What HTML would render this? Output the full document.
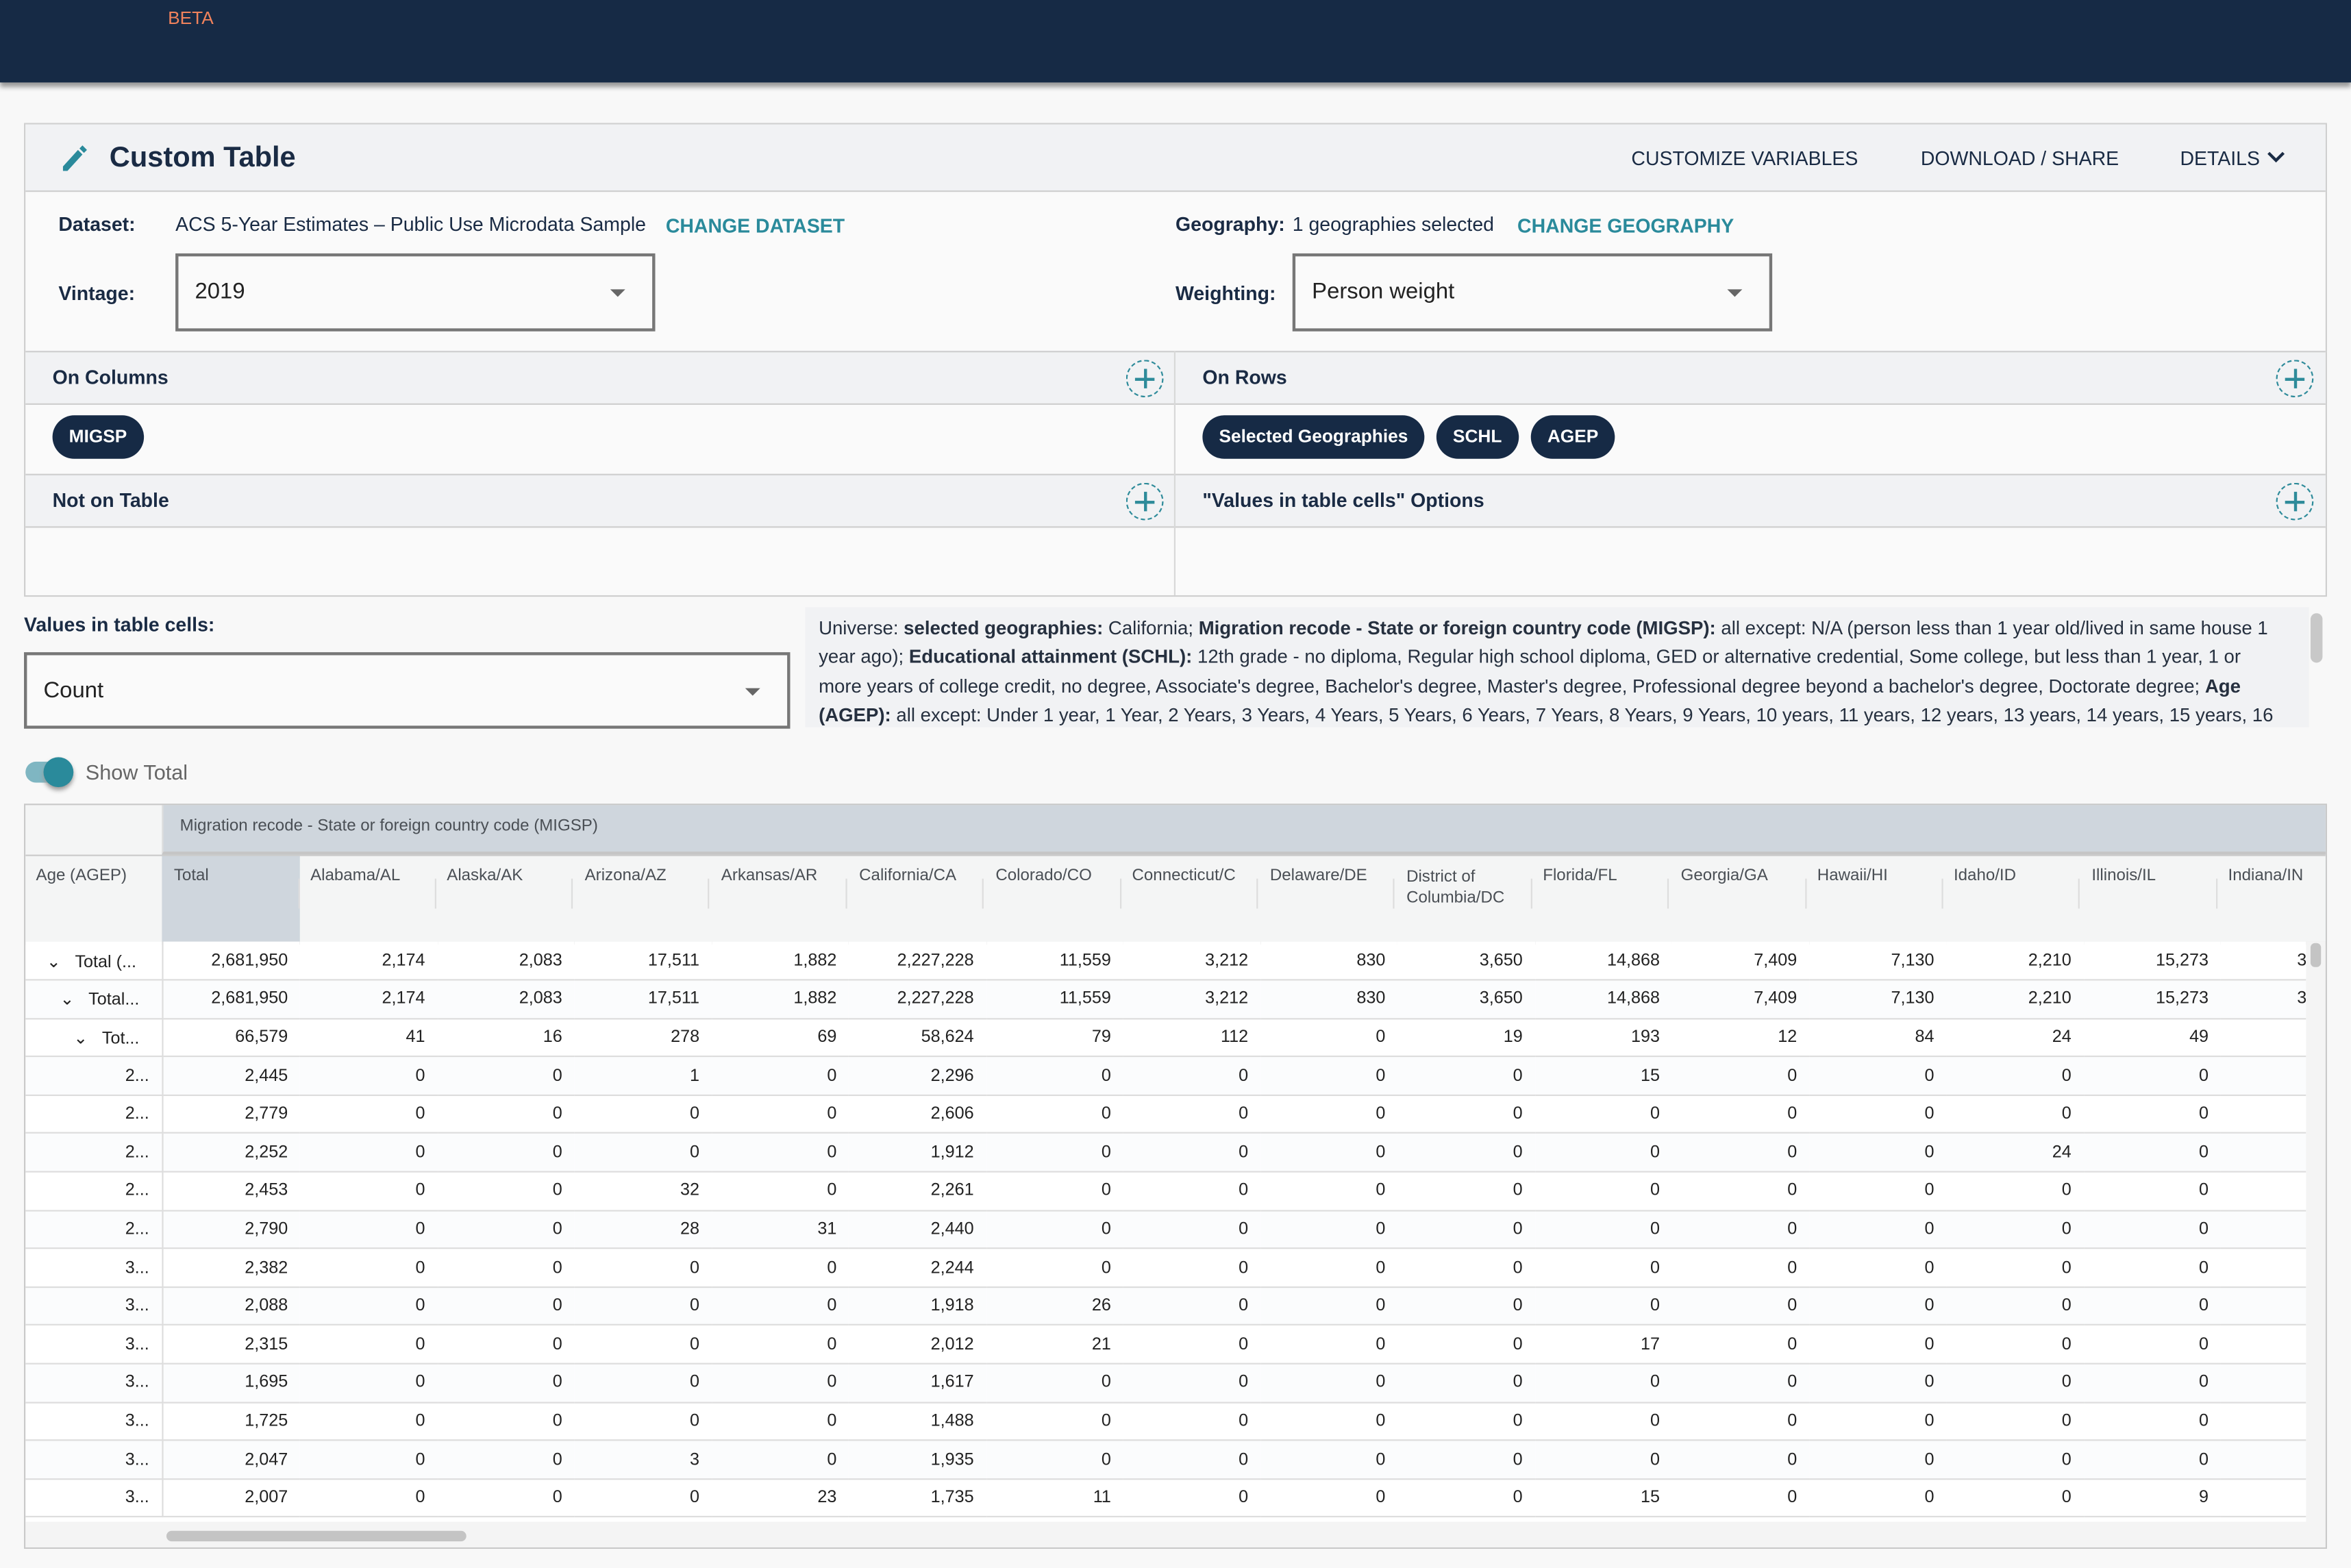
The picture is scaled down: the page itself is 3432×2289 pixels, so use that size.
<!DOCTYPE html>
<html><head><meta charset="utf-8">
<style>
html,body{margin:0;padding:0;}
body{width:3432px;height:2288px;overflow:hidden;background:#f8f8f8;font-family:"Liberation Sans",sans-serif;}
#w{position:absolute;left:0;top:0;width:1568px;height:1046px;transform:scale(2.18878);transform-origin:0 0;color:#1a2b44;}
.a{position:absolute;}
.hdr{left:0;top:0;width:1568px;height:55px;background:#162a45;box-shadow:0 3px 3px #999;}
.panel{left:16px;top:82px;width:1534px;height:314px;border:1px solid #cfcfcf;background:#fafafa;}
.bar{background:#f1f2f4;border-top:1px solid #cfcfcf;border-bottom:1px solid #cfcfcf;}
.lbl{font-size:13px;font-weight:bold;}
.chip{background:#162a45;color:#fff;font-size:12px;font-weight:bold;border-radius:15px;height:29px;line-height:29px;padding:0 11px;}
.plus{width:23px;height:23px;border:1px dashed #2e8b9a;border-radius:50%;}
.plus:before{content:"";position:absolute;left:11px;top:5px;width:1.5px;height:13px;background:#2e8b9a;}
.plus:after{content:"";position:absolute;left:5px;top:11px;width:13px;height:1.5px;background:#2e8b9a;}
.sel{border:2px solid #777;background:#fafafa;font-size:15px;color:#222;}
.sel .t{position:absolute;left:11px;top:15px;}
.sel .c{position:absolute;right:18px;top:22px;width:0;height:0;border-left:5px solid transparent;border-right:5px solid transparent;border-top:5px solid #666;}
.teal{color:#2a8a9b;font-weight:bold;font-size:13px;}
table{border-collapse:collapse;table-layout:fixed;font-size:11.5px;color:#222;}
td{height:25.6px;padding:0 8px;text-align:right;border-bottom:1px solid #ddd;white-space:nowrap;overflow:hidden;box-sizing:border-box;}
td:first-child{border-right:1px solid #ddd;}
tr:nth-child(odd) td{background:#fff;}
tr:nth-child(even) td{background:#fbfcfd;}
.hc{font-size:11px;color:#4a4f55;}
</style></head><body><div id="w">
<div class="a hdr"></div>
<div class="a" style="left:112px;top:5px;font-size:12px;color:#f0825c;">BETA</div>

<div class="a panel">
 <div class="a" style="left:0;top:0;width:1534px;height:44px;background:#f1f2f4;border-bottom:1px solid #cfcfcf;"></div>
 <svg class="a" style="left:23px;top:13px" width="20" height="20" viewBox="0 0 20 20"><path d="M2 18 L2 15 L12 4 L15 7 L5 18 Z" fill="#2a8a9b"/><path d="M13 3 L15 1 L18 4 L16 6 Z" fill="#2a8a9b"/></svg>
 <div class="a" style="left:56px;top:12px;font-size:19px;font-weight:bold;">Custom Table</div>
 <div class="a" style="left:1071px;top:15px;font-size:13px;">CUSTOMIZE VARIABLES</div>
 <div class="a" style="left:1264px;top:15px;font-size:13px;">DOWNLOAD / SHARE</div>
 <div class="a" style="left:1437px;top:15px;font-size:13px;">DETAILS</div>
 <svg class="a" style="left:1495px;top:17px" width="12" height="10"><path d="M1 2 L6 7 L11 2" stroke="#1a2b44" stroke-width="2" fill="none"/></svg>

 <div class="a lbl" style="left:22px;top:59px;">Dataset:</div>
 <div class="a" style="left:100px;top:59px;font-size:13px;">ACS 5-Year Estimates – Public Use Microdata Sample</div>
 <div class="a teal" style="left:427px;top:60px;">CHANGE DATASET</div>
 <div class="a lbl" style="left:22px;top:105px;">Vintage:</div>
 <div class="a sel" style="left:100px;top:86px;width:316px;height:48px;"><span class="t">2019</span><span class="c"></span></div>
 <div class="a lbl" style="left:767px;top:59px;">Geography:</div>
 <div class="a" style="left:845px;top:59px;font-size:13px;">1 geographies selected</div>
 <div class="a teal" style="left:995px;top:60px;">CHANGE GEOGRAPHY</div>
 <div class="a lbl" style="left:767px;top:105px;">Weighting:</div>
 <div class="a sel" style="left:845px;top:86px;width:316px;height:48px;"><span class="t">Person weight</span><span class="c"></span></div>

 <div class="a bar" style="left:0;top:151px;width:1534px;height:34px;"></div>
 <div class="a bar" style="left:0;top:233px;width:1534px;height:34px;"></div>
 <div class="a" style="left:766px;top:151px;width:1px;height:163px;background:#d8d8d8;"></div>
 <div class="a lbl" style="left:18px;top:161px;">On Columns</div>
 <div class="a lbl" style="left:785px;top:161px;">On Rows</div>
 <div class="a lbl" style="left:18px;top:243px;">Not on Table</div>
 <div class="a lbl" style="left:785px;top:243px;">"Values in table cells" Options</div>
 <div class="a plus" style="left:734px;top:157px;"></div>
 <div class="a plus" style="left:1501px;top:157px;"></div>
 <div class="a plus" style="left:734px;top:239px;"></div>
 <div class="a plus" style="left:1501px;top:239px;"></div>
 <div class="a chip" style="left:18px;top:194px;">MIGSP</div>
 <div class="a chip" style="left:785px;top:194px;">Selected Geographies</div>
 <div class="a chip" style="left:941px;top:194px;">SCHL</div>
 <div class="a chip" style="left:1004px;top:194px;">AGEP</div>
</div>

<div class="a lbl" style="left:16px;top:409px;">Values in table cells:</div>
<div class="a sel" style="left:16px;top:435px;width:507px;height:47px;"><span class="t">Count</span><span class="c"></span></div>

<div class="a" style="left:537px;top:405px;width:1003px;height:80px;background:#f1f2f4;overflow:hidden;font-size:12.6px;line-height:19.3px;color:#26303f;">
<div style="padding:5px 20px 0 9px;">Universe: <b>selected geographies:</b> California; <b>Migration recode - State or foreign country code (MIGSP):</b> all except: N/A (person less than 1 year old/lived in same house 1 year ago); <b>Educational attainment (SCHL):</b> 12th grade - no diploma, Regular high school diploma, GED or alternative credential, Some college, but less than 1 year, 1 or more years of college credit, no degree, Associate's degree, Bachelor's degree, Master's degree, Professional degree beyond a bachelor's degree, Doctorate degree; <b>Age (AGEP):</b> all except: Under 1 year, 1 Year, 2 Years, 3 Years, 4 Years, 5 Years, 6 Years, 7 Years, 8 Years, 9 Years, 10 years, 11 years, 12 years, 13 years, 14 years, 15 years, 16 years</div></div>
<div class="a" style="left:1541px;top:409px;width:8px;height:33px;background:#c8c8c8;border-radius:4px;"></div>

<div class="a" style="left:17px;top:508px;width:28px;height:14px;background:#7fb6c2;border-radius:7px;"></div>
<div class="a" style="left:29px;top:505px;width:20px;height:20px;background:#2a8a9b;border-radius:50%;box-shadow:0 2px 3px #999;"></div>
<div class="a" style="left:57px;top:507px;font-size:14px;color:#666;">Show Total</div>

<div class="a" style="left:16px;top:536px;width:1534px;height:495px;border:1px solid #c9c9c9;background:#fff;overflow:hidden;">
 <div class="a" style="left:0;top:0;width:1534px;height:91px;background:#f4f5f5;border-bottom:2px solid #ccc;"></div>
 <div class="a" style="left:91px;top:0;width:1443px;height:31px;background:#cfd6dd;border-bottom:2px solid #c5c5c5;border-left:1px solid #ddd;"></div>
 <div class="a hc" style="left:103px;top:8px;">Migration recode - State or foreign country code (MIGSP)</div>
 <div class="a" style="left:91px;top:33px;width:92px;height:58px;background:#cfd6dd;"></div>
 <div class="a" style="left:0;top:33px;width:1534px;height:1px;background:#ccc;"></div>
 <div class="a hc" style="left:7px;top:41px;">Age (AGEP)</div>
 <div class="a hc" style="left:99px;top:41px;">Total</div>
 <div class="a hc" style="left:190px;top:41px;">Alabama/AL</div>
 <div class="a hc" style="left:281px;top:41px;">Alaska/AK</div>
 <div class="a hc" style="left:373px;top:41px;">Arizona/AZ</div>
 <div class="a hc" style="left:464px;top:41px;">Arkansas/AR</div>
 <div class="a hc" style="left:556px;top:41px;">California/CA</div>
 <div class="a hc" style="left:647px;top:41px;">Colorado/CO</div>
 <div class="a hc" style="left:738px;top:41px;">Connecticut/C</div>
 <div class="a hc" style="left:830px;top:41px;">Delaware/DE</div>
 <div class="a hc" style="left:921px;top:41px;line-height:14px;">District of<br>Columbia/DC</div>
 <div class="a hc" style="left:1012px;top:41px;">Florida/FL</div>
 <div class="a hc" style="left:1104px;top:41px;">Georgia/GA</div>
 <div class="a hc" style="left:1195px;top:41px;">Hawaii/HI</div>
 <div class="a hc" style="left:1286px;top:41px;">Idaho/ID</div>
 <div class="a hc" style="left:1378px;top:41px;">Illinois/IL</div>
 <div class="a hc" style="left:1469px;top:41px;">Indiana/IN</div>
 <div class="a" style="left:182px;top:49px;width:1px;height:20px;background:#ddd;box-shadow:91px 0 #ddd,182px 0 #ddd,273px 0 #ddd,365px 0 #ddd,456px 0 #ddd,548px 0 #ddd,639px 0 #ddd,730px 0 #ddd,822px 0 #ddd,913px 0 #ddd,1005px 0 #ddd,1096px 0 #ddd,1187px 0 #ddd,1279px 0 #ddd;"></div>

 <div class="a" style="left:0;top:91px;width:1521px;height:386px;overflow:hidden;">
 <table style="width:1554px;">
 <colgroup><col style="width:91px"><col style="width:92px"><col span="14" style="width:91.5px"><col style="width:90px"></colgroup>
 <tr><td style="text-align:left;padding-left:14px">⌄&nbsp;&nbsp; Total (...</td><td>2,681,950</td><td>2,174</td><td>2,083</td><td>17,511</td><td>1,882</td><td>2,227,228</td><td>11,559</td><td>3,212</td><td>830</td><td>3,650</td><td>14,868</td><td>7,409</td><td>7,130</td><td>2,210</td><td>15,273</td><td style="text-align:left;padding-left:51px">3</td></tr>
 <tr><td style="text-align:left;padding-left:23px">⌄&nbsp;&nbsp; Total...</td><td>2,681,950</td><td>2,174</td><td>2,083</td><td>17,511</td><td>1,882</td><td>2,227,228</td><td>11,559</td><td>3,212</td><td>830</td><td>3,650</td><td>14,868</td><td>7,409</td><td>7,130</td><td>2,210</td><td>15,273</td><td style="text-align:left;padding-left:51px">3</td></tr>
 <tr><td style="text-align:left;padding-left:32px">⌄&nbsp;&nbsp; Tot...</td><td>66,579</td><td>41</td><td>16</td><td>278</td><td>69</td><td>58,624</td><td>79</td><td>112</td><td>0</td><td>19</td><td>193</td><td>12</td><td>84</td><td>24</td><td>49</td><td></td></tr>
 <tr><td>2...</td><td>2,445</td><td>0</td><td>0</td><td>1</td><td>0</td><td>2,296</td><td>0</td><td>0</td><td>0</td><td>0</td><td>15</td><td>0</td><td>0</td><td>0</td><td>0</td><td></td></tr>
 <tr><td>2...</td><td>2,779</td><td>0</td><td>0</td><td>0</td><td>0</td><td>2,606</td><td>0</td><td>0</td><td>0</td><td>0</td><td>0</td><td>0</td><td>0</td><td>0</td><td>0</td><td></td></tr>
 <tr><td>2...</td><td>2,252</td><td>0</td><td>0</td><td>0</td><td>0</td><td>1,912</td><td>0</td><td>0</td><td>0</td><td>0</td><td>0</td><td>0</td><td>0</td><td>24</td><td>0</td><td></td></tr>
 <tr><td>2...</td><td>2,453</td><td>0</td><td>0</td><td>32</td><td>0</td><td>2,261</td><td>0</td><td>0</td><td>0</td><td>0</td><td>0</td><td>0</td><td>0</td><td>0</td><td>0</td><td></td></tr>
 <tr><td>2...</td><td>2,790</td><td>0</td><td>0</td><td>28</td><td>31</td><td>2,440</td><td>0</td><td>0</td><td>0</td><td>0</td><td>0</td><td>0</td><td>0</td><td>0</td><td>0</td><td></td></tr>
 <tr><td>3...</td><td>2,382</td><td>0</td><td>0</td><td>0</td><td>0</td><td>2,244</td><td>0</td><td>0</td><td>0</td><td>0</td><td>0</td><td>0</td><td>0</td><td>0</td><td>0</td><td></td></tr>
 <tr><td>3...</td><td>2,088</td><td>0</td><td>0</td><td>0</td><td>0</td><td>1,918</td><td>26</td><td>0</td><td>0</td><td>0</td><td>0</td><td>0</td><td>0</td><td>0</td><td>0</td><td></td></tr>
 <tr><td>3...</td><td>2,315</td><td>0</td><td>0</td><td>0</td><td>0</td><td>2,012</td><td>21</td><td>0</td><td>0</td><td>0</td><td>17</td><td>0</td><td>0</td><td>0</td><td>0</td><td></td></tr>
 <tr><td>3...</td><td>1,695</td><td>0</td><td>0</td><td>0</td><td>0</td><td>1,617</td><td>0</td><td>0</td><td>0</td><td>0</td><td>0</td><td>0</td><td>0</td><td>0</td><td>0</td><td></td></tr>
 <tr><td>3...</td><td>1,725</td><td>0</td><td>0</td><td>0</td><td>0</td><td>1,488</td><td>0</td><td>0</td><td>0</td><td>0</td><td>0</td><td>0</td><td>0</td><td>0</td><td>0</td><td></td></tr>
 <tr><td>3...</td><td>2,047</td><td>0</td><td>0</td><td>3</td><td>0</td><td>1,935</td><td>0</td><td>0</td><td>0</td><td>0</td><td>0</td><td>0</td><td>0</td><td>0</td><td>0</td><td></td></tr>
 <tr><td>3...</td><td>2,007</td><td>0</td><td>0</td><td>0</td><td>23</td><td>1,735</td><td>11</td><td>0</td><td>0</td><td>0</td><td>15</td><td>0</td><td>0</td><td>0</td><td>9</td><td></td></tr>
 </table></div>
 <div class="a" style="left:1521px;top:91px;width:13px;height:404px;background:#f4f4f4;"></div>
 <div class="a" style="left:1524px;top:92px;width:7px;height:16px;background:#c4c4c4;border-radius:3px;"></div>
 <div class="a" style="left:0;top:478px;width:1521px;height:17px;background:#f4f4f4;"></div>
 <div class="a" style="left:94px;top:484px;width:200px;height:7px;background:#c4c4c4;border-radius:4px;"></div>
</div>
</div></body></html>
